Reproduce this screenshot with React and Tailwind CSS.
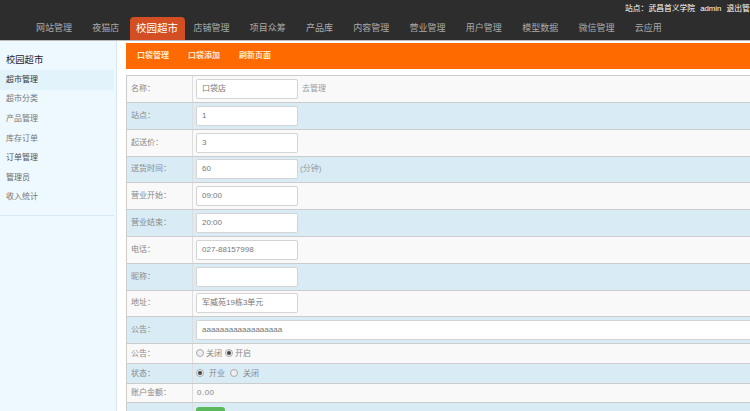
const navItems = ["网站管理", "夜猫店", "校园超市", "店铺管理", "项目众筹", "产品库", "内容管理", "营业管理", "用户管理", "模型数据", "微信管理", "云应用"];
const sideItems = [
  { name: "超市管理", cls: "bg-[#e3f3fc] text-[#333]" },
  { name: "超市分类", cls: "text-[#777]" },
  { name: "产品管理", cls: "text-[#777]" },
  { name: "库存订单", cls: "text-[#777]" },
  { name: "订单管理", cls: "text-[#555]" },
  { name: "管理员", cls: "text-[#666]" },
  { name: "收入统计", cls: "text-[#777]" },
];
const tabs = ["口袋管理", "口袋添加", "刷新页面"];

function Field({ value, wide }) {
  return (
    <div className={`flex h-5 items-center rounded-[2px] border border-[#d4d4d4] bg-white pl-[5px] text-[8px] text-[#777] ${wide ? "w-[600px]" : "w-[102px]"}`}>
      {value}
    </div>
  );
}

function Radio({ on }) {
  return (
    <span className="-mt-[2px] flex h-[8px] w-[8px] shrink-0 items-center justify-center rounded-full border border-[#aaa] bg-[#eee]">
      {on && <span className="h-[4px] w-[4px] rounded-full bg-[#444]" />}
    </span>
  );
}

function Row({ label, blue, h = "h-[26.8px]", children }) {
  return (
    <div className={`flex ${h} border-b border-[#ccc] ${blue ? "bg-[#d9ecf5]" : "bg-[#f9f9f9]"}`}>
      <div className="flex w-[66px] shrink-0 items-center border-r border-[#ddd] pl-[4px] text-[8px] text-[#888]">{label}</div>
      <div className="flex items-center gap-[2px] pl-[3px] text-[8px] text-[#888]">{children}</div>
    </div>
  );
}

export default function App() {
  return (
    <div className="h-[411px] w-[750px] overflow-hidden bg-white font-['Liberation_Sans','Noto_Sans_CJK_SC',sans-serif]">
      <div className="flex h-[41px] flex-col justify-between border-b border-[#bbb] bg-[#2d2d2d]">
        <div className="flex h-[17px] items-center whitespace-nowrap pl-[625px] text-[7.8px] text-white">
          站点：武昌首义学院<span className="mx-[5px]">admin</span>退出管理
        </div>
        <div className="flex h-[23px] items-end gap-[20.25px] pl-[36px]">
          {navItems.map((n) =>
            n === "校园超市" ? (
              <div key={n} className="-ml-[10px] -mr-[11.25px] flex h-[23px] w-[55px] shrink-0 items-center justify-center rounded-t-[4px] bg-[#d34f23] text-[10.5px] text-white">{n}</div>
            ) : (
              <div key={n} className="flex h-[23px] items-center whitespace-nowrap text-[9px] text-[#aaa]">{n}</div>
            )
          )}
        </div>
      </div>
      <div className="flex h-[370px]">
        <div className="w-[117px] shrink-0 border-r border-[#d5e8f3] bg-[#edf8ff] pr-[2px]">
          <div className="border-b border-[#d5e8f3] pb-[8px] pt-[10px]">
            <div className="flex h-[19px] items-center pl-[6px] text-[9.3px] text-[#223]">校园超市</div>
            {sideItems.map((s) => (
              <div key={s.name} className={`flex h-[19.6px] items-center pl-[6px] text-[8px] ${s.cls}`}>{s.name}</div>
            ))}
          </div>
        </div>
        <div className="min-w-0 flex-1 pl-[9px] pt-[2px]">
          <div className="flex h-[26px] items-center gap-[19px] bg-[#ff6a00] pl-[11px] text-[8px] font-bold text-[#ffe8d0]">
            {tabs.map((t) => <span key={t}>{t}</span>)}
          </div>
          <div className="mt-[6px] w-[640px] border-l border-t border-[#ccc]">
            <Row label="名称：" h="h-[27px]"><Field value="口袋店" /><span className="ml-[2px] text-[#999]">去管理</span></Row>
            <Row label="站点：" blue><Field value="1" /></Row>
            <Row label="起送价："><Field value="3" /></Row>
            <Row label="送货时间：" blue><Field value="60" /><span className="text-[#999]">(分钟)</span></Row>
            <Row label="营业开始："><Field value="09:00" /></Row>
            <Row label="营业结束：" blue><Field value="20:00" /></Row>
            <Row label="电话："><Field value="027-88157998" /></Row>
            <Row label="昵称：" blue><Field value="" /></Row>
            <Row label="地址："><Field value="军威苑19栋3单元" /></Row>
            <Row label="公告：" blue><Field value="aaaaaaaaaaaaaaaaaa" wide /></Row>
            <Row label="公告：" h="h-[20px]"><Radio /><span className="mr-[1px]">关闭</span><Radio on /><span>开启</span></Row>
            <Row label="状态：" blue h="h-[20px]"><Radio on /><span className="mx-[3px]">开业</span><Radio /><span className="mx-[3px]">关闭</span></Row>
            <Row label="账户金额：" h="h-[19px]"><span className="pl-[1px] tracking-[0.5px]">0.00</span></Row>
            <div className="flex h-[20px] bg-[#d9ecf5]">
              <div className="w-[66px] shrink-0 border-r border-[#ddd]" />
              <div className="ml-[3px] mt-[4px] h-[16px] w-[29px] rounded-t-[3px] bg-[#5cb85c]" />
            </div>
          </div>
        </div>
      </div>
    </div>
  );
}
